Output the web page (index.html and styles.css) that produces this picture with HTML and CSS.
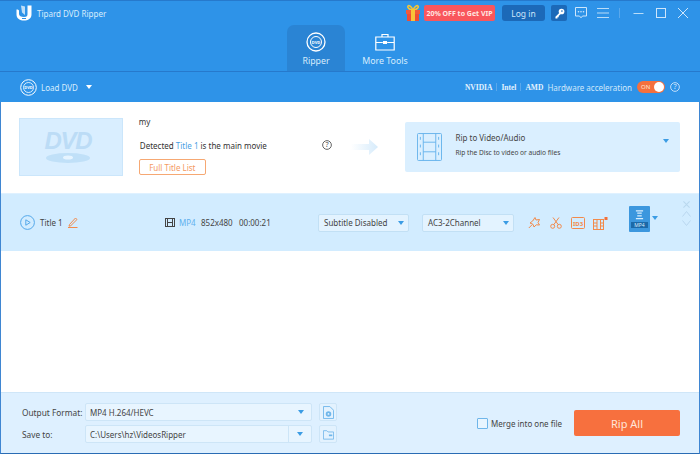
FILE: index.html
```html
<!DOCTYPE html>
<html lang="en">
<head>
<meta charset="utf-8">
<title>Tipard DVD Ripper</title>
<link rel="stylesheet" href="styles.css">
</head>
<body>
<div class="app">
  <header class="header">
    <div class="topbar">
      <svg class="logo" viewBox="0 0 16 16"><path d="M.5 4.500C2.500 4.500 3 5 3 6v3c0 2 2 3 5 3s3.500-1 3.500-3V.5h4v9c0 4-3.500 6-7.500 6s-7.500-2-7.500-6z" fill="#fff"/><path d="M5 .5l4 1V10L6 7.500z" fill="#fff" opacity=".7"/><path d="M6 13h4v1H6z" fill="#2e93e8"/></svg>
      <span class="app-name">Tipard DVD Ripper</span>
      <div class="spacer"></div>
      <svg class="gift" viewBox="0 0 16 18"><path d="M8 6C6 2 4 1 3 2s1 4 5 4zM8 6c2-4 4-5 5-4s-1 4-5 4z" fill="none" stroke="#f7c534" stroke-width="1.500"/><rect x="1" y="6" width="14" height="4" fill="#f05a3c"/><rect x="2" y="10" width="12" height="7" fill="#ee4d36"/><rect x="6" y="6" width="4" height="11" fill="#f9c438"/></svg>
      <span class="vip">20% OFF to Get VIP</span>
      <span class="login">Log in</span>
      <span class="keybtn"><svg viewBox="0 0 16 16"><circle cx="10.500" cy="5.500" r="3.500" fill="#fff"/><path d="M8 7l-5 5v2h2.500v-1.500H7V11l3-3z" fill="#fff"/><circle cx="11" cy="5" r="1" fill="#1c69b8"/></svg></span>
      <svg class="ico-chat" viewBox="0 0 14 14"><path d="M1.500 1.500h11v8.500H8.500L7 11.800 5.500 10h-4z" fill="none" stroke="#cfe6fb"/><circle cx="4.500" cy="5.700" r=".8" fill="#cfe6fb"/><circle cx="7" cy="5.700" r=".8" fill="#cfe6fb"/><circle cx="9.500" cy="5.700" r=".8" fill="#cfe6fb"/></svg>
      <svg class="ico-menu" viewBox="0 0 12 12"><path d="M0 1.500h12M0 6h12M0 10.500h12" stroke="#b9dcf8" fill="none"/></svg>
      <span class="divider"></span>
      <svg class="ico-min" viewBox="0 0 10 10"><path d="M0 5.500h10" stroke="#b9dcf8" fill="none"/></svg>
      <svg class="ico-max" viewBox="0 0 12 12"><rect x="1.500" y="1.500" width="9" height="9" stroke="#cfe6fb" fill="none"/></svg>
      <svg class="ico-close" viewBox="0 0 12 12"><path d="M1 1l10 10M11 1L1 11" stroke="#cfe6fb" fill="none"/></svg>
    </div>
    <nav class="tabs">
      <div class="tab active">
        <svg class="tab-ico" viewBox="0 0 20 20"><circle cx="10" cy="10" r="9" fill="none" stroke="#fff" stroke-width="1.300"/><circle cx="10" cy="10" r="5.500" fill="none" stroke="#fff"/><text x="10" y="11.500" class="disc-txt">DVD</text></svg>
        <span>Ripper</span>
      </div>
      <div class="tab">
        <svg class="tab-ico" viewBox="0 0 20 20"><path d="M7 5V2.500h6V5M.8 5h18.400v13H.8zM.8 10.500h7M12.200 10.500h7" fill="none" stroke="#fff" stroke-width="1.200"/><rect x="8" y="9" width="4" height="3" fill="#fff"/></svg>
        <span>More Tools</span>
      </div>
    </nav>
    <div class="toolbar">
      <svg class="load-ico" viewBox="0 0 17 17"><circle cx="8.500" cy="8.500" r="7.800" fill="none" stroke="#fff"/><circle cx="8.500" cy="8.500" r="5" fill="none" stroke="#fff" stroke-width=".8"/><text x="8.500" y="10" class="disc-txt">DVD</text></svg>
      <span class="load-text">Load DVD</span>
      <span class="caret white"></span>
      <div class="spacer"></div>
      <b class="gpu">NVIDIA</b><i class="gpu-sep"></i><b class="gpu">Intel</b><i class="gpu-sep"></i><b class="gpu">AMD</b>
      <span class="hw">Hardware acceleration</span>
      <span class="toggle"><span>ON</span><i></i></span>
      <svg class="help-w" viewBox="0 0 11 11"><circle cx="5.500" cy="5.500" r="4.800" fill="none" stroke="#cfe6fb"/><text x="5.500" y="8" class="q-txt light">?</text></svg>
    </div>
  </header>

  <section class="disc">
    <div class="thumb">
      <span class="dvd-word">DVD</span>
      <svg class="dvd-disc" viewBox="0 0 44 10"><ellipse cx="22" cy="5" rx="22" ry="5" fill="#c0e0f8"/><ellipse cx="22" cy="4.500" rx="5" ry="2" fill="#e6f4ff"/></svg>
    </div>
    <div class="disc-info">
      <div class="disc-name">my</div>
      <div class="detected"><span>Detected <em>Title 1</em> is the main movie</span>
        <svg class="help" viewBox="0 0 11 11"><circle cx="5.500" cy="5.500" r="4.800" fill="none" stroke="#555"/><text x="5.500" y="8" class="q-txt">?</text></svg>
      </div>
      <span class="full-list">Full Title List</span>
    </div>
    <svg class="arrow" viewBox="0 0 27 16"><defs><linearGradient id="fade"><stop offset="0" stop-color="#fff"/><stop offset="1" stop-color="#d6ebfb"/></linearGradient></defs><path d="M0 5h18V0l9 8-9 8v-5H0z" fill="url(#fade)"/></svg>
    <div class="rip-box">
      <svg class="film" viewBox="0 0 26 29"><g fill="none" stroke="#68b4ec"><rect x=".5" y=".5" width="25" height="28" rx="1"/><path d="M6.500.5v28M19.500.5v28M6.500 9.500h13M6.500 19.500h13"/><path d="M3.500 4v4M3.500 12v4M3.500 20v4M22.500 4v4M22.500 12v4M22.500 20v4" stroke-dasharray="3 2"/></g></svg>
      <div class="rip-text">
        <div class="rip-title">Rip to Video/Audio</div>
        <div class="rip-sub">Rip the Disc to video or audio files</div>
      </div>
      <span class="caret blue rip-caret"></span>
    </div>
  </section>

  <section class="title-row">
    <svg class="play" viewBox="0 0 15 15"><circle cx="7.500" cy="7.500" r="6.900" fill="none" stroke="#54a8ea"/><path d="M5.800 4.800l4.400 2.700-4.400 2.700z" fill="none" stroke="#54a8ea"/></svg>
    <span class="title-name">Title 1</span>
    <svg class="pencil" viewBox="0 0 10 11"><path d="M1.500 7.500L7.500 1l1.500 1.500-6.200 6.200-1.800.5zM0 10.500h9.500" fill="none" stroke="#f28a4b"/></svg>
    <svg class="mini-film" viewBox="0 0 10 9"><g fill="none" stroke="#444"><rect x=".5" y=".5" width="9" height="8"/><path d="M2.500.5v8M7.500.5v8M2.500 4.500h5"/></g></svg>
    <span class="meta-fmt">MP4</span>
    <span class="meta">852x480</span>
    <span class="meta time">00:00:21</span>
    <div class="select sub"><span>Subtitle Disabled</span><span class="caret blue small"></span></div>
    <div class="select aud"><span>AC3-2Channel</span><span class="caret blue small"></span></div>
    <svg class="act a1" viewBox="0 0 13 13"><path d="M7 1.500l1 2.500 3.500-.5-1.500 3 1.500 2.500-3.200-.2L6 11 5 8.300 2 7l2.700-2zM4 8.800L.8 12" fill="none" stroke="#f28a4b"/></svg>
    <svg class="act a2" viewBox="0 0 12 12"><g fill="none" stroke="#f28a4b"><circle cx="2.700" cy="9.300" r="2"/><circle cx="9.300" cy="9.300" r="2"/><path d="M3.800 7.600L9 .5M8.200 7.600L3 .5"/></g></svg>
    <svg class="act a3" viewBox="0 0 14 12"><rect x=".5" y=".5" width="13" height="11" rx="1" fill="none" stroke="#f28a4b"/><text x="7" y="8.700" class="id3">ID3</text></svg>
    <svg class="act a4" viewBox="0 0 15 14"><g fill="none" stroke="#f28a4b"><rect x=".5" y="3.500" width="10" height="10"/><path d="M4 3.500v10M7.500 3.500v10M.5 7h3.500M.5 10h3.500M7.500 7h3M7.500 10h3"/></g><rect x="11.500" y="1" width="3" height="3" fill="#f2703a"/></svg>
    <div class="fmt-tile">
      <svg viewBox="0 0 10 10"><path d="M1 .5h8M2.500 3h5M2.500 6h5M1 9h8" stroke="#d8eefe" stroke-width="1.400" fill="none"/></svg>
      <span>MP4</span>
    </div>
    <span class="caret blue small fmt-caret"></span>
    <div class="row-ctrl">
      <svg viewBox="0 0 9 8"><path d="M1 .5l7 7M8 .5l-7 7" stroke="#b9d8ef" stroke-width="1.200" fill="none"/></svg>
      <svg viewBox="0 0 9 6"><path d="M.5 5.500l4-5 4 5" stroke="#b9d8ef" fill="none"/></svg>
      <svg viewBox="0 0 9 6"><path d="M.5.500l4 5 4-5" stroke="#b9d8ef" fill="none"/></svg>
    </div>
  </section>

  <div class="empty"></div>

  <footer class="footer">
    <div class="fields">
      <label class="lbl">Output Format:</label>
      <div class="field"><span>MP4 H.264/HEVC</span><span class="caret blue small"></span></div>
      <span class="sq"><svg viewBox="0 0 12 14"><path d="M.5.500h7l4 4v9H.5z" fill="none" stroke="#6fb6ea"/><circle cx="6" cy="8.500" r="3" fill="#6fb6ea"/><circle cx="6" cy="8.500" r="1" fill="#e3f2fe"/></svg></span>
      <label class="lbl">Save to:</label>
      <div class="field path"><span>C:\Users\hz\VideosRipper</span><span class="drop"><span class="caret blue small"></span></span></div>
      <span class="sq"><svg viewBox="0 0 13 12"><path d="M.5 1.500h4l1.500 1.500h6.500v8.500H.5z" fill="none" stroke="#6fb6ea"/><rect x="7" y="6" width="4" height="2" fill="#6fb6ea"/></svg></span>
    </div>
    <div class="merge"><span class="check"></span><span>Merge into one file</span></div>
    <button class="rip-all">Rip All</button>
  </footer>
</div>
</body>
</html>
```
FILE: styles.css
```css
* { box-sizing: border-box; }
html, body { margin: 0; padding: 0; }
body { width: 700px; height: 454px; overflow: hidden; background: #fff; font-family: "Noto Sans", sans-serif; color: #333; }
.app { width: 700px; height: 454px; display: flex; flex-direction: column; border-left: 1px solid #3f86d2; border-right: 1px solid #3f86d2; border-bottom: 1px solid #2a6cb4; }
.spacer { flex: 1; }
svg { display: block; flex: none; }

.header { background: #2e93e8; border-top: 1px solid #2679cc; margin: 0 -1px; color: #fff; }
.topbar { height: 24px; display: flex; align-items: center; padding: 0 11px 0 16px; }
.logo { width: 16px; height: 16px; }
.app-name { margin-left: 5px; font-size: 8px; color: #d8edfd; }
.gift { width: 16px; height: 18px; }
.vip { margin-left: 3px; width: 71px; height: 16px; background: #f9565c; border-radius: 2px; font-size: 7px; font-weight: bold; color: #ffe6e2; display: flex; align-items: center; justify-content: center; white-space: nowrap; }
.login { margin-left: 7px; width: 43px; height: 16px; background: #1c69b8; border-radius: 3px; color: #cfe6fb; font-size: 8.500px; display: flex; align-items: center; justify-content: center; }
.keybtn { margin-left: 6px; width: 16px; height: 16px; background: #1c69b8; border-radius: 2px; display: flex; align-items: center; justify-content: center; }
.keybtn svg { width: 13px; height: 13px; }
.ico-chat { margin-left: 7px; width: 14px; height: 14px; }
.ico-menu { margin-left: 9px; width: 12px; height: 12px; }
.divider { margin-left: 10px; width: 1px; height: 10px; background: #5aa8ec; }
.ico-min { margin-left: 13px; width: 11px; height: 10px; }
.ico-max { margin-left: 11px; width: 12px; height: 12px; }
.ico-close { margin-left: 10px; width: 12px; height: 12px; }

.tabs { height: 46px; display: flex; justify-content: center; padding-left: 1px; }
.tab { width: 58px; display: flex; flex-direction: column; align-items: center; padding-top: 7px; border-radius: 7px 7px 0 0; font-size: 8.800px; line-height: 12px; color: #d8edfd; white-space: nowrap; }
.tab.active { background: #2a84d4; }
.tab-ico { width: 20px; height: 20px; margin-bottom: 3px; }
.disc-txt { font-size: 4px; fill: #fff; text-anchor: middle; font-weight: bold; }
.tabs .tab + .tab { margin-left: 11px; }

.toolbar { height: 31px; border-top: 1px solid #2679cc; display: flex; align-items: center; padding: 0 20px; }
.load-ico { width: 17px; height: 17px; }
.load-text { margin-left: 4px; font-size: 8px; color: #d8edfd; }
.caret { width: 0; height: 0; border-left: 3.500px solid transparent; border-right: 3.500px solid transparent; border-top: 4px solid #fff; flex: none; }
.caret.white { margin-left: 8px; }
.caret.blue { border-top-color: #3b9ce4; }
.gpu { font-family: "Liberation Serif", serif; font-size: 7.500px; color: #e3f2fe; }
.gpu-sep { width: 1px; height: 8px; margin: 0 4px; background: #5aa8ec; }
.hw { margin-left: 4px; font-size: 8px; color: #d0e8fb; }
.toggle { margin-left: 5px; width: 28px; height: 12px; border-radius: 6px; background: #f4703e; display: flex; align-items: center; justify-content: space-between; padding: 0 1px 0 4px; font-size: 6px; color: #ffe0d0; }
.toggle i { width: 10px; height: 10px; border-radius: 50%; background: #fff; }
.help-w { margin-left: 5px; width: 10px; height: 10px; }
.q-txt { font-size: 8px; text-anchor: middle; fill: #555; }
.q-txt.light { fill: #cfe6fb; }

.disc { height: 91px; display: flex; align-items: center; padding: 0 19px 1px 18px; flex: none; }
.thumb { width: 104px; height: 58px; background: #d9eeff; border: 1px solid #cbe6fb; display: flex; flex-direction: column; align-items: center; justify-content: center; padding-right: 6px; }
.dvd-word { font-family: "Liberation Sans", sans-serif; font-weight: bold; font-style: italic; font-size: 24px; line-height: 17px; letter-spacing: -1.200px; color: #bcdcf6; }
.dvd-disc { width: 44px; height: 10px; margin-top: 4px; }
.disc-info { width: 193px; margin-left: 16px; align-self: flex-start; margin-top: 14px; display: flex; flex-direction: column; align-items: flex-start; font-size: 8px; }
.disc-name { height: 12px; line-height: 12px; margin-bottom: 11px; }
.detected { width: 100%; display: flex; justify-content: space-between; align-items: center; height: 12px; margin-left: 1px; }
.detected em { font-style: normal; color: #4a9fe4; }
.help { width: 10px; height: 10px; }
.full-list { margin-top: 8px; height: 16px; width: 67px; border: 1px solid #f6a873; border-radius: 2px; color: #f49a62; display: flex; align-items: center; justify-content: center; white-space: nowrap; }
.arrow { width: 27px; height: 16px; margin-left: 20px; }
.rip-box { width: 275px; height: 50px; margin-left: 27px; background: #daefff; border-radius: 2px; display: flex; align-items: center; padding: 0 11px 0 12px; }
.film { width: 25px; height: 28px; }
.rip-text { flex: 1; margin-left: 13px; margin-bottom: 4px; }
.rip-title { font-size: 8px; line-height: 11px; color: #444; margin-bottom: 5px; }
.rip-sub { font-size: 6.600px; line-height: 10px; color: #444; }
.rip-caret { margin-bottom: 13px; }

.title-row { height: 58px; background: #d2ecff; display: flex; align-items: center; padding-left: 19px; flex: none; border-top: 1px solid #dff1ff; }
.play { width: 15px; height: 15px; }
.title-name { margin-left: 5px; width: 28px; font-size: 8px; color: #444; white-space: nowrap; }
.pencil { width: 10px; height: 11px; }
.mini-film { width: 10px; height: 9px; margin-left: 87px; }
.meta-fmt { margin-left: 4px; width: 16px; font-size: 8px; color: #5fb0ee; }
.meta { margin-left: 6px; width: 32px; font-size: 8px; color: #444; white-space: nowrap; }
.meta.time { width: 33px; }
.select { height: 18px; background: #e3f3ff; border: 1px solid #c2e0f5; border-radius: 2px; display: flex; align-items: center; justify-content: space-between; padding: 0 4px 0 5px; font-size: 8px; color: #444; white-space: nowrap; flex: none; }
.select.sub { width: 91px; margin-left: 46px; }
.select.aud { width: 92px; margin-left: 13px; }
.act.a1 { width: 13px; height: 13px; margin-left: 14px; }
.act.a2 { width: 12px; height: 12px; margin-left: 9px; }
.act.a3 { width: 14px; height: 12px; margin-left: 9px; }
.act.a4 { width: 15px; height: 14px; margin-left: 8px; }
.id3 { font-size: 6px; fill: #f28a4b; text-anchor: middle; font-weight: bold; }
.fmt-tile { width: 21px; height: 26px; margin-left: 21px; margin-bottom: 8px; background: #3c97de; border-radius: 1px; display: flex; flex-direction: column; align-items: center; padding-top: 4px; flex: none; }
.fmt-tile svg { width: 9px; height: 10px; }
.fmt-tile span { margin-top: 2px; width: 17px; height: 6px; background: #1c69a8; font-size: 5px; line-height: 6px; text-align: center; color: #d8eefe; }
.fmt-caret { margin-left: 2px; margin-bottom: 10px; }
.row-ctrl { margin-left: 24px; display: flex; flex-direction: column; gap: 3px; margin-bottom: 18px; }
.row-ctrl svg { width: 9px; }
.row-ctrl svg:first-child { height: 7px; }
.row-ctrl svg:not(:first-child) { height: 6px; }

.empty { flex: 1; }

.footer { height: 61px; flex: none; background: #def0ff; border-top: 1px solid #cfe6f8; display: flex; align-items: center; padding-left: 21px; }
.fields { display: grid; grid-template-columns: 63px 227px 25px; row-gap: 4px; align-items: center; flex: none; }
.lbl { font-size: 8.300px; color: #444; white-space: nowrap; }
.field { height: 18px; background: #e8f5ff; border: 1px solid #cde5f7; border-radius: 2px; display: flex; align-items: center; justify-content: space-between; padding: 0 7px 0 4px; font-size: 8px; color: #444; }
.field.path { padding-right: 0; }
.drop { width: 23px; height: 100%; border-left: 1px solid #cde5f7; display: flex; align-items: center; justify-content: center; }
.sq { width: 18px; height: 18px; margin-left: 7px; background: #e3f2fe; border: 1px solid #cde5f7; border-radius: 2px; display: flex; align-items: center; justify-content: center; }
.sq svg { width: 11px; height: 13px; }
.merge { margin-left: 140px; width: 83px; flex: none; display: flex; align-items: center; font-size: 8px; color: #444; white-space: nowrap; }
.check { width: 11px; height: 11px; margin-right: 3px; background: #e8f5ff; border: 1px solid #6fb6ea; border-radius: 1px; flex: none; }
.rip-all { margin-left: 14px; width: 106px; height: 26px; flex: none; border: 0; border-radius: 2px; background: #f7703e; color: #ffe6da; font-family: inherit; font-size: 11px; padding: 0; }
```
